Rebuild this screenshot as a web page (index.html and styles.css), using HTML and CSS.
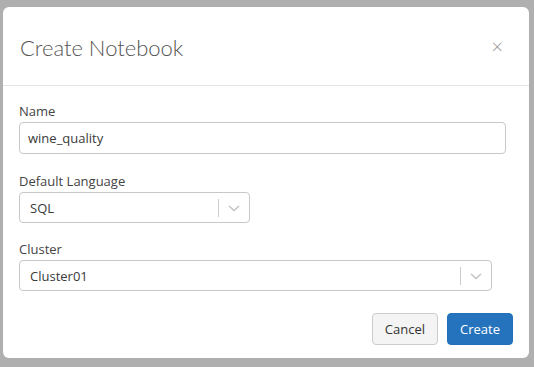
FILE: index.html
```html
<!DOCTYPE html>
<html lang="en">
<head>
    <meta charset="UTF-8">
    <title>Create Notebook</title>
    <link rel="stylesheet" href="styles.css">
</head>
<body>
    <div class="modal">
        <div class="modal-header">
            <h1>Create Notebook</h1>
            <span class="close">&times;</span>
        </div>
        <div class="modal-body">
            <div class="field name">
                <label>Name</label>
                <div class="input">wine_quality</div>
            </div>
            <div class="field language">
                <label>Default Language</label>
                <div class="select lang">
                    <span class="value">SQL</span>
                    <span class="sep"></span>
                    <svg class="arrow" width="20" height="20" viewBox="0 0 20 20"><path d="M5 8 L10 12.5 L15 8" fill="none" stroke="#c4c4c4" stroke-width="1.6"/></svg>
                </div>
            </div>
            <div class="field">
                <label>Cluster</label>
                <div class="select cluster">
                    <span class="value">Cluster01</span>
                    <span class="sep"></span>
                    <svg class="arrow" width="20" height="20" viewBox="0 0 20 20"><path d="M5 8 L10 12.5 L15 8" fill="none" stroke="#c4c4c4" stroke-width="1.6"/></svg>
                </div>
            </div>
            <div class="actions">
                <button class="btn btn-default">Cancel</button>
                <button class="btn btn-primary">Create</button>
            </div>
        </div>
    </div>
</body>
</html>
```

FILE: styles.css
```css
body {
    margin: 0;
    background-color: #afafaf;
    font-family: "Open Sans", "Noto Sans", sans-serif;
    font-size: 13px;
    color: #3a3a3a;
    padding: 7px 5px 0 3px;
}
.modal {
    background-color: #fff;
    border-radius: 6px;
    height: 351px;
    box-sizing: border-box;
}
.modal-header {
    display: flex;
    align-items: center;
    justify-content: space-between;
    height: 78px;
    padding: 0 26px 0 17px;
    border-bottom: 1px solid #e5e5e5;
}
.modal-header h1 {
    margin: 0;
    font-family: "Lato", sans-serif;
    font-weight: 300;
    font-size: 22px;
    color: #555;
    padding-top: 2px;
}
.close {
    font-size: 20px;
    color: #999;
    font-weight: 300;
}
.modal-body {
    padding: 16px 16px 0 16px;
}
.field {
    margin-bottom: 16px;
}
.field.name {
    margin-bottom: 18px;
}
.field.language {
    margin-bottom: 17px;
}
.field label {
    display: block;
    color: #444;
    margin-bottom: 2px;
    line-height: 18px;
}
.input, .select {
    box-sizing: border-box;
    height: 32px;
    border: 1px solid #c8c8c8;
    border-radius: 4px;
    display: flex;
    align-items: center;
    padding-left: 8px;
}
.input {
    width: 487px;
}
.select {
    padding-left: 10px;
    height: 31px;
}
.select .value {
    flex: 1;
}
.select.lang {
    width: 231px;
}
.select.cluster {
    width: 473px;
}
.sep {
    width: 1px;
    height: 18px;
    background-color: #ccc;
}
.arrow {
    margin: 0 5px 0 5px;
}
.actions {
    display: flex;
    justify-content: flex-end;
    gap: 9px;
    margin-top: 22px;
}
.btn {
    font-family: "Open Sans", "Noto Sans", sans-serif;
    font-size: 13px;
    height: 32px;
    border-radius: 4px;
    padding: 0 12px;
    cursor: pointer;
}
.btn-default {
    background-color: #f4f4f4;
    border: 1px solid #ccc;
    color: #333;
}
.btn-primary {
    background-color: #2573bd;
    border: 1px solid #2270ba;
    color: #fff;
}
```
